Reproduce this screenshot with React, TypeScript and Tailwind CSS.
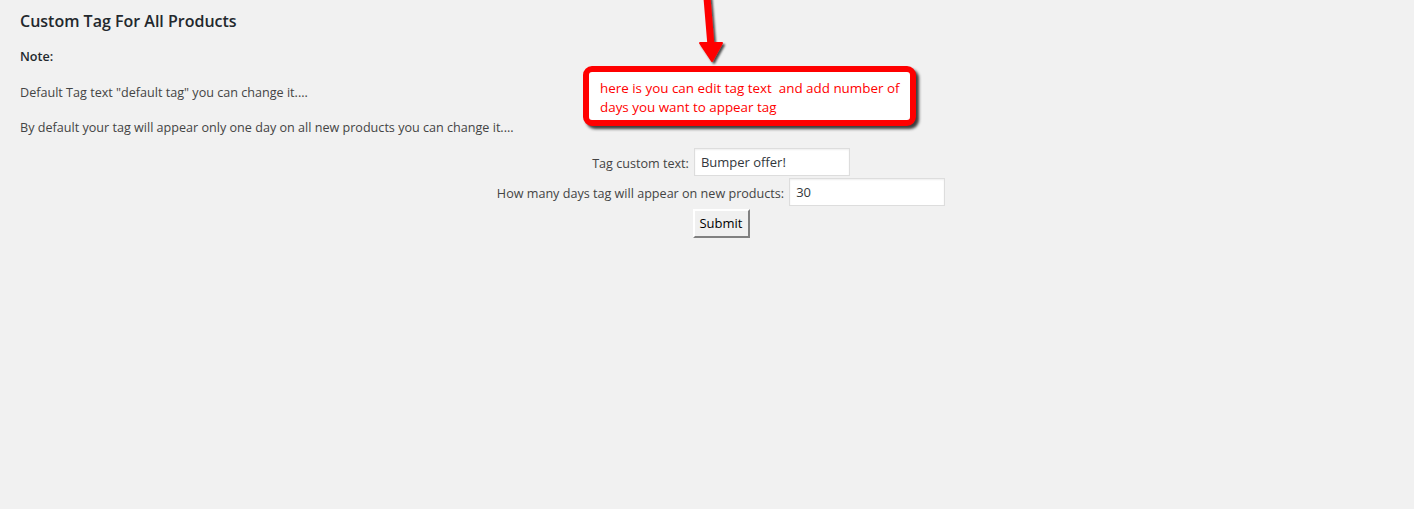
import React from 'react';

function Callout() {
  return (
    <div className="pointer-events-none absolute left-0 top-0">
      <svg className="absolute left-[696px] top-0" width="32" height="66" viewBox="0 0 32 66">
        <defs>
          <filter id="sh" x="-50%" y="-50%" width="200%" height="200%">
            <feDropShadow dx="2" dy="2" stdDeviation="1.2" floodColor="#000" floodOpacity="0.7" />
          </filter>
        </defs>
        <g filter="url(#sh)">
          <path d="M11 -2 L15 46" stroke="#ff0000" strokeWidth="7" strokeLinecap="round" />
          <path d="M4 43 L26 43 L16 61 Z" fill="#ff0000" stroke="#ff0000" strokeWidth="2" strokeLinejoin="round" />
        </g>
      </svg>
      <div className="absolute left-[583px] top-[66px] h-[60px] w-[333px] rounded-[9px] border-[6px] border-[#ff0000] bg-white pl-[11px] pt-[7px] text-[13.4px] leading-[19px] text-[#ff0000] shadow-[3px_3px_3px_rgba(0,0,0,0.75)]">
        here is you can edit tag text&nbsp; and add number of
        <br />
        days you want to appear tag
      </div>
    </div>
  );
}

export default function App() {
  return (
    <div className="relative min-h-[509px] bg-[#f1f1f1] font-['Open_Sans',sans-serif] text-[12.6px] text-[#444]">
      <div className="px-5 pt-[9px]">
        <h2 className="text-[16px] font-semibold leading-6 text-[#23282d]">Custom Tag For All Products</h2>
        <p className="mt-[14px] font-semibold leading-[19px] text-[#23282d]">Note:</p>
        <p className="mt-[17px] leading-[19px]">Default Tag text "default tag" you can change it....</p>
        <p className="mt-[16px] leading-[19px]">By default your tag will appear only one day on all new products you can change it....</p>
      </div>
      <form className="mt-[11px] flex flex-col items-center pl-[28px]" onSubmit={e => e.preventDefault()}>
        <div className="flex items-center">
          <label className="mr-[5px] mt-[4px]">Tag custom text:</label>
          <input
            defaultValue="Bumper offer!"
            className="h-[28px] w-[156px] border border-[#ddd] bg-white px-[6px] text-[13px] text-[#32373c] shadow-[inset_0_1px_2px_rgba(0,0,0,0.07)] outline-none"
          />
        </div>
        <div className="mt-[2px] flex items-center">
          <label className="mr-[5px] mt-[4px]">How many days tag will appear on new products:</label>
          <input
            defaultValue="30"
            className="h-[28px] w-[156px] border border-[#ddd] bg-white px-[6px] text-[13px] text-[#32373c] shadow-[inset_0_1px_2px_rgba(0,0,0,0.07)] outline-none"
          />
        </div>
        <button
          type="submit"
          className="mt-[3px] h-[29px] w-[57px] border-2 border-t-white border-l-white border-r-[#808080] border-b-[#808080] bg-[#f0f0f0] pt-[1px] text-[13px] text-black"
        >
          Submit
        </button>
      </form>
      <Callout />
    </div>
  );
}
